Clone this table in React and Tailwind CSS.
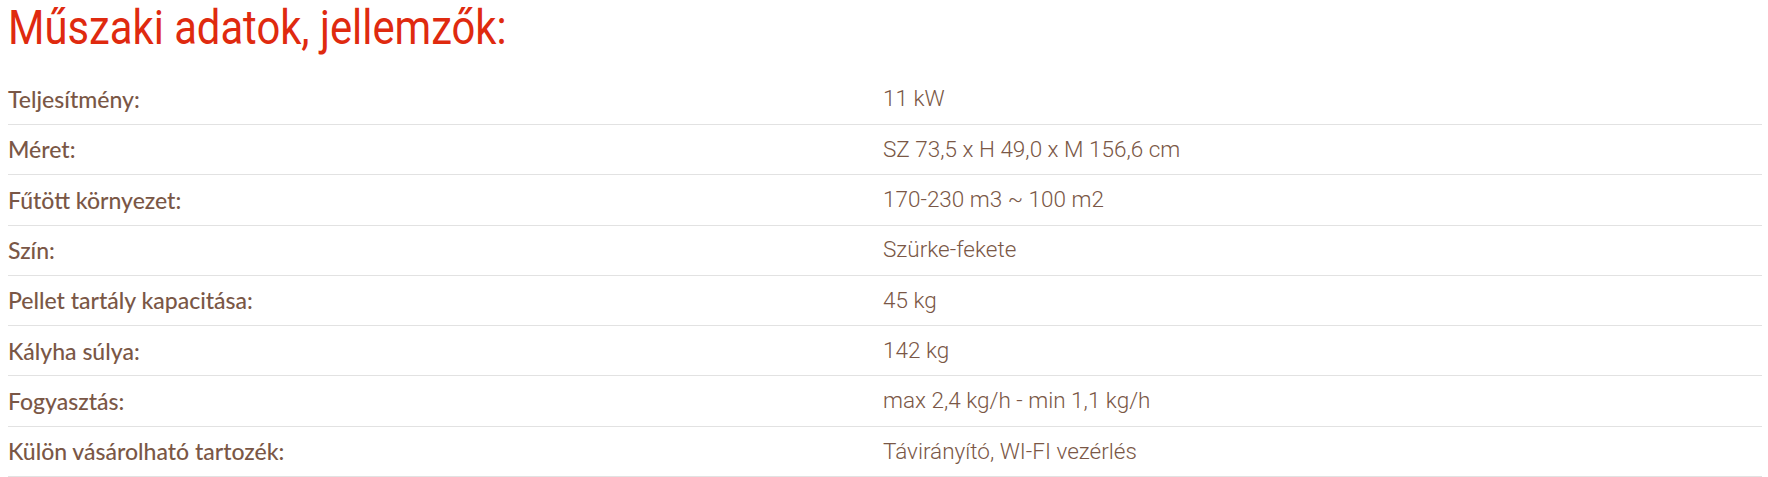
const SPECS = [
  { label: 'Teljesítmény:', value: '11 kW' },
  { label: 'Méret:', value: 'SZ 73,5 x H 49,0 x M 156,6 cm' },
  { label: 'Fűtött környezet:', value: '170-230 m3 ~ 100 m2' },
  { label: 'Szín:', value: 'Szürke-fekete' },
  { label: 'Pellet tartály kapacitása:', value: '45 kg' },
  { label: 'Kályha súlya:', value: '142 kg' },
  { label: 'Fogyasztás:', value: 'max 2,4 kg/h - min 1,1 kg/h' },
  { label: 'Külön vásárolható tartozék:', value: 'Távirányító, WI-FI vezérlés' },
];

const SpecRow = ({ label, value }) => (
  <div className="grid grid-cols-2 h-[50.3px] items-center border-b border-[#e2e2e2]">
    <div className="font-['Lato',sans-serif] font-medium text-[23px] text-[#7a5746]">{label}</div>
    <div className="font-['Roboto',sans-serif] font-light text-[22.5px] text-[#7a5746] -ml-[2px]">{value}</div>
  </div>
);

const App = () => {
  return (
    <div className="bg-white w-[1768px] h-[477px] overflow-hidden">
      <div className="h-[74.7px] pl-[8px] pt-[4px]">
        <h2 className="inline-block origin-left scale-x-[0.87] font-['Roboto',sans-serif] font-normal text-[48px] leading-[48px] text-[#df2a0f] whitespace-nowrap">
          Műszaki adatok, jellemzők:
        </h2>
      </div>
      <div className="ml-[8px] w-[1754px]">
        {SPECS.map((spec) => (
          <SpecRow key={spec.label} {...spec} />
        ))}
      </div>
    </div>
  );
};

export default App;
